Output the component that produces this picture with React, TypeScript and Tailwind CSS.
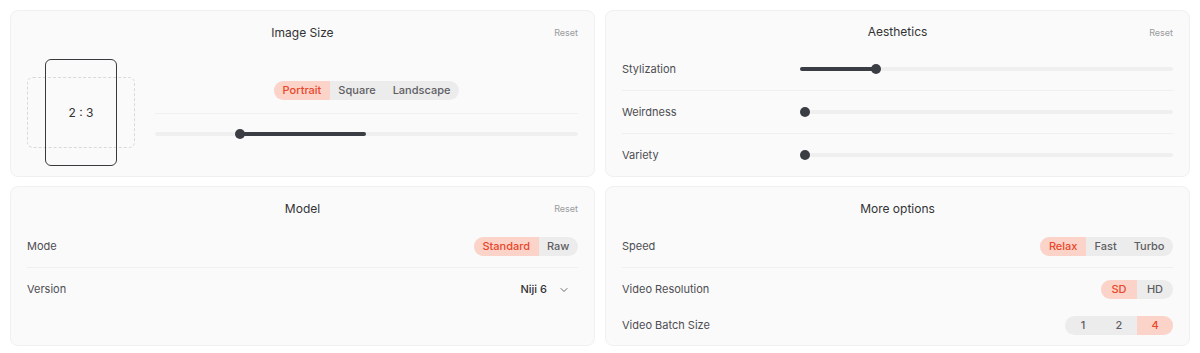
import { ChevronDown } from "lucide-react";

type SegProps = { options: string[]; active: number; fixed?: boolean };

function Segmented({ options, active, fixed }: SegProps) {
	return (
		<div className="flex h-[19px] rounded-full bg-[#ececed] overflow-hidden text-[11px] font-medium leading-[19px]">
			{options.map((o, i) => (
				<div
					key={o}
					className={
						(i === active ? "bg-[#fcd3c8] text-[#e8472b] " : "text-[#5e5e62] ") +
						(fixed ? "w-[36px] text-center" : "px-[8.5px]")
					}
				>
					{o}
				</div>
			))}
		</div>
	);
}

// thumb = position of the knob (0..1), fill from/to in percent of the track
function Slider({ thumb, from, to }: { thumb: number; from: number; to: number }) {
	return (
		<div className="relative h-1 w-full rounded-full bg-[#efeff0]">
			<div
				className="absolute top-0 h-1 rounded-full bg-[#3b3d45]"
				style={{ left: `${from}%`, width: `${to - from}%` }}
			/>
			<div
				className="absolute top-[-3px] h-[10px] w-[10px] rounded-full bg-[#3b3d45]"
				style={{ left: `calc(${thumb} * (100% - 10px))` }}
			/>
		</div>
	);
}

function Header({ title, reset = true }: { title: string; reset?: boolean }) {
	return (
		<div className="grid grid-cols-[1fr_auto_1fr] items-center h-[38px] pt-[5px]">
			<div />
			<h2 className="text-[12px] leading-[18px] text-[#333335]">{title}</h2>
			{reset ? (
				<span className="justify-self-end text-[9px] text-[#9a9a9e]">Reset</span>
			) : (
				<div />
			)}
		</div>
	);
}

function Card({ children }: { children: React.ReactNode }) {
	return (
		<div className="flex flex-col rounded-lg border border-[#f0f0f1] bg-[#fafafa] px-4">
			{children}
		</div>
	);
}

function Row({ label, children, line = true }: { label: string; children: React.ReactNode; line?: boolean }) {
	return (
		<div
			className={
				"flex h-[43px] items-center justify-between " +
				(line ? "border-b border-[#f0f0f1]" : "")
			}
		>
			<span className="text-[11px] text-[#4d4d52]">{label}</span>
			{children}
		</div>
	);
}

function App() {
	let sliders = [
		{ label: "Stylization", thumb: 0.195, to: 20.3 },
		{ label: "Weirdness", thumb: 0, to: 0 },
		{ label: "Variety", thumb: 0, to: 0 },
	];

	return (
		<div
			className="grid h-[353px] w-[1200px] grid-cols-2 grid-rows-[167px_160px] gap-x-[10px] gap-y-[9px] bg-white p-[10px]"
			style={{ fontFamily: "Inter, 'Noto Sans', sans-serif" }}
		>
			<Card>
				<Header title="Image Size" />
				<div className="flex flex-1 gap-5">
					<div className="relative mt-[10px] h-[107px] w-[108px] shrink-0">
						<div className="absolute left-0 top-[18px] h-[71px] w-[108px] rounded-md border border-dashed border-[#d9d9db]" />
						<div className="absolute left-[18px] top-0 flex h-[107px] w-[72px] items-center justify-center rounded-md border-[1.5px] border-[#3a3a3e] text-[12px] text-[#333335]">
							2 : 3
						</div>
					</div>
					<div className="flex flex-1 flex-col pt-[19px]">
						<div className="flex h-[46px] items-center justify-center border-b border-[#f0f0f1]">
							<Segmented options={["Portrait", "Square", "Landscape"]} active={0} />
						</div>
						<div className="flex h-[40px] items-center">
							<Slider thumb={0.193} from={20} to={49.8} />
						</div>
					</div>
				</div>
			</Card>

			<Card>
				<Header title="Aesthetics" />
				{sliders.map((s, i) => (
					<div
						key={s.label}
						className={
							"flex h-[43px] items-center " +
							(i < sliders.length - 1 ? "border-b border-[#f0f0f1]" : "")
						}
					>
						<span className="w-[178px] shrink-0 text-[11px] text-[#4d4d52]">{s.label}</span>
						<Slider thumb={s.thumb} from={0} to={s.to} />
					</div>
				))}
			</Card>

			<Card>
				<Header title="Model" />
				<Row label="Mode">
					<Segmented options={["Standard", "Raw"]} active={0} />
				</Row>
				<Row label="Version" line={false}>
					<div className="flex items-center gap-[11px] pr-[8px]">
						<span className="text-[11px] font-medium text-[#333335]">Niji 6</span>
						<ChevronDown size={12} strokeWidth={2} className="text-[#6b6b70]" />
					</div>
				</Row>
			</Card>

			<Card>
				<Header title="More options" reset={false} />
				<Row label="Speed">
					<Segmented options={["Relax", "Fast", "Turbo"]} active={0} />
				</Row>
				<div className="flex flex-col pt-[3px]">
					<div className="flex h-[36px] items-center justify-between">
						<span className="text-[11px] text-[#4d4d52]">Video Resolution</span>
						<Segmented options={["SD", "HD"]} active={0} fixed />
					</div>
					<div className="flex h-[36px] items-center justify-between">
						<span className="text-[11px] text-[#4d4d52]">Video Batch Size</span>
						<Segmented options={["1", "2", "4"]} active={2} fixed />
					</div>
				</div>
			</Card>
		</div>
	);
}

export default App;
